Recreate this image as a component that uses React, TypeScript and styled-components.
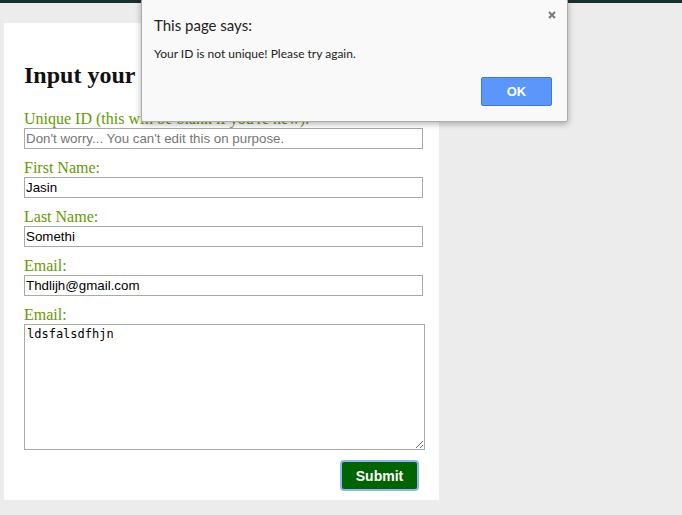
import styled, { createGlobalStyle } from "styled-components";

const GlobalStyle = createGlobalStyle`
  html, body {
    margin: 0;
    padding: 0;
    background: #ececec;
  }
  * {
    box-sizing: border-box;
  }
`;

const Pagina = styled.div`
  position: relative;
  min-height: 515px;
  background: #ececec;
`;

const FaixaTopo = styled.div`
  height: 3px;
  background: #17302f;
`;

const Conteudo = styled.div`
  padding: 20px 0 0 4px;
`;

const Cartao = styled.form`
  width: 435px;
  background: #ffffff;
  padding: 19px 16px 9px 20px;
  font-family: "Liberation Serif", "Times New Roman", serif;
`;

const Titulo = styled.h2`
  margin: 20px 0 21px 0;
  font-size: 24px;
  line-height: 27px;
  font-weight: bold;
  color: #111;
`;

const Campo = styled.div`
  margin-bottom: 10px;
`;

const Rotulo = styled.label`
  display: block;
  font-size: 16px;
  line-height: 18px;
  color: #669900;
`;

const Entrada = styled.input`
  display: block;
  width: 399px;
  height: 21px;
  margin: 0;
  padding: 1px 1px;
  border: 1px solid #a9a9a9;
  font-family: "Liberation Sans", Arial, sans-serif;
  font-size: 13.33px;
  color: #000;
  background: #fff;
  outline: none;

  &::placeholder {
    color: #767676;
  }
`;

const AreaTexto = styled.textarea`
  display: block;
  width: 401px;
  height: 126px;
  margin: 0;
  padding: 2px 2px;
  border: 1px solid #a9a9a9;
  font-family: "DejaVu Sans Mono", "Liberation Mono", monospace;
  font-size: 12px;
  line-height: 15px;
  color: #000;
  resize: both;
  outline: none;
`;

const Rodape = styled.div`
  display: flex;
  justify-content: flex-end;
  padding-right: 4px;
`;

const BotaoEnviar = styled.button`
  width: 79px;
  height: 31px;
  border: 2px solid #8fb5f0;
  border-radius: 4px;
  background: #006400;
  color: #fff;
  font-family: "Liberation Sans", Arial, sans-serif;
  font-size: 14px;
  font-weight: bold;
  padding: 0;
`;

const Dialogo = styled.div`
  position: absolute;
  left: 141px;
  top: -1px;
  width: 427px;
  height: 123px;
  background: #f9f9f9;
  border: 1px solid #acacac;
  border-radius: 2px;
  box-shadow: 0 2px 6px rgba(0, 0, 0, 0.3);
  padding: 15px 15px 15px 12px;
  display: flex;
  flex-direction: column;
  font-family: Lato, "Noto Sans", sans-serif;
`;

const DialogoTitulo = styled.div`
  font-size: 15px;
  line-height: 20px;
  color: #222;
`;

const DialogoMensagem = styled.div`
  margin-top: 11px;
  font-size: 12px;
  line-height: 16px;
  color: #222;
`;

const DialogoAcoes = styled.div`
  margin-top: auto;
  display: flex;
  justify-content: flex-end;
`;

const BotaoOk = styled.button`
  width: 71px;
  height: 29px;
  background: #5b97fb;
  border: 1px solid #3f78d8;
  border-radius: 2px;
  color: #fff;
  font-family: "Liberation Sans", Arial, sans-serif;
  font-size: 13px;
  font-weight: bold;
  padding: 0;
`;

const Fechar = styled.button`
  position: absolute;
  right: 10px;
  top: 10px;
  width: 10px;
  height: 10px;
  padding: 0;
  border: none;
  background: transparent;
  display: flex;
  align-items: center;
  justify-content: center;
`;

const campos = [
  { rotulo: "First Name:", valor: "Jasin" },
  { rotulo: "Last Name:", valor: "Somethi" },
  { rotulo: "Email:", valor: "Thdlijh@gmail.com" },
];

export default function App() {
  return (
    <Pagina>
      <GlobalStyle />
      <FaixaTopo />
      <Conteudo>
        <Cartao onSubmit={(e) => e.preventDefault()}>
          <Titulo>Input your information:</Titulo>
          <Campo>
            <Rotulo>Unique ID (this will be blank if you're new):</Rotulo>
            <Entrada readOnly placeholder="Don't worry... You can't edit this on purpose." />
          </Campo>
          {campos.map((c, i) => (
            <Campo key={i}>
              <Rotulo>{c.rotulo}</Rotulo>
              <Entrada defaultValue={c.valor} />
            </Campo>
          ))}
          <Campo>
            <Rotulo>Email:</Rotulo>
            <AreaTexto defaultValue="ldsfalsdfhjn" />
          </Campo>
          <Rodape>
            <BotaoEnviar type="submit">Submit</BotaoEnviar>
          </Rodape>
        </Cartao>
      </Conteudo>

      <Dialogo>
        <Fechar aria-label="Fechar">
          <svg width="8" height="8" viewBox="0 0 8 8">
            <path d="M1 1 L7 7 M7 1 L1 7" stroke="#7a7a7a" strokeWidth="2" />
          </svg>
        </Fechar>
        <DialogoTitulo>This page says:</DialogoTitulo>
        <DialogoMensagem>Your ID is not unique! Please try again.</DialogoMensagem>
        <DialogoAcoes>
          <BotaoOk>OK</BotaoOk>
        </DialogoAcoes>
      </Dialogo>
    </Pagina>
  );
}
